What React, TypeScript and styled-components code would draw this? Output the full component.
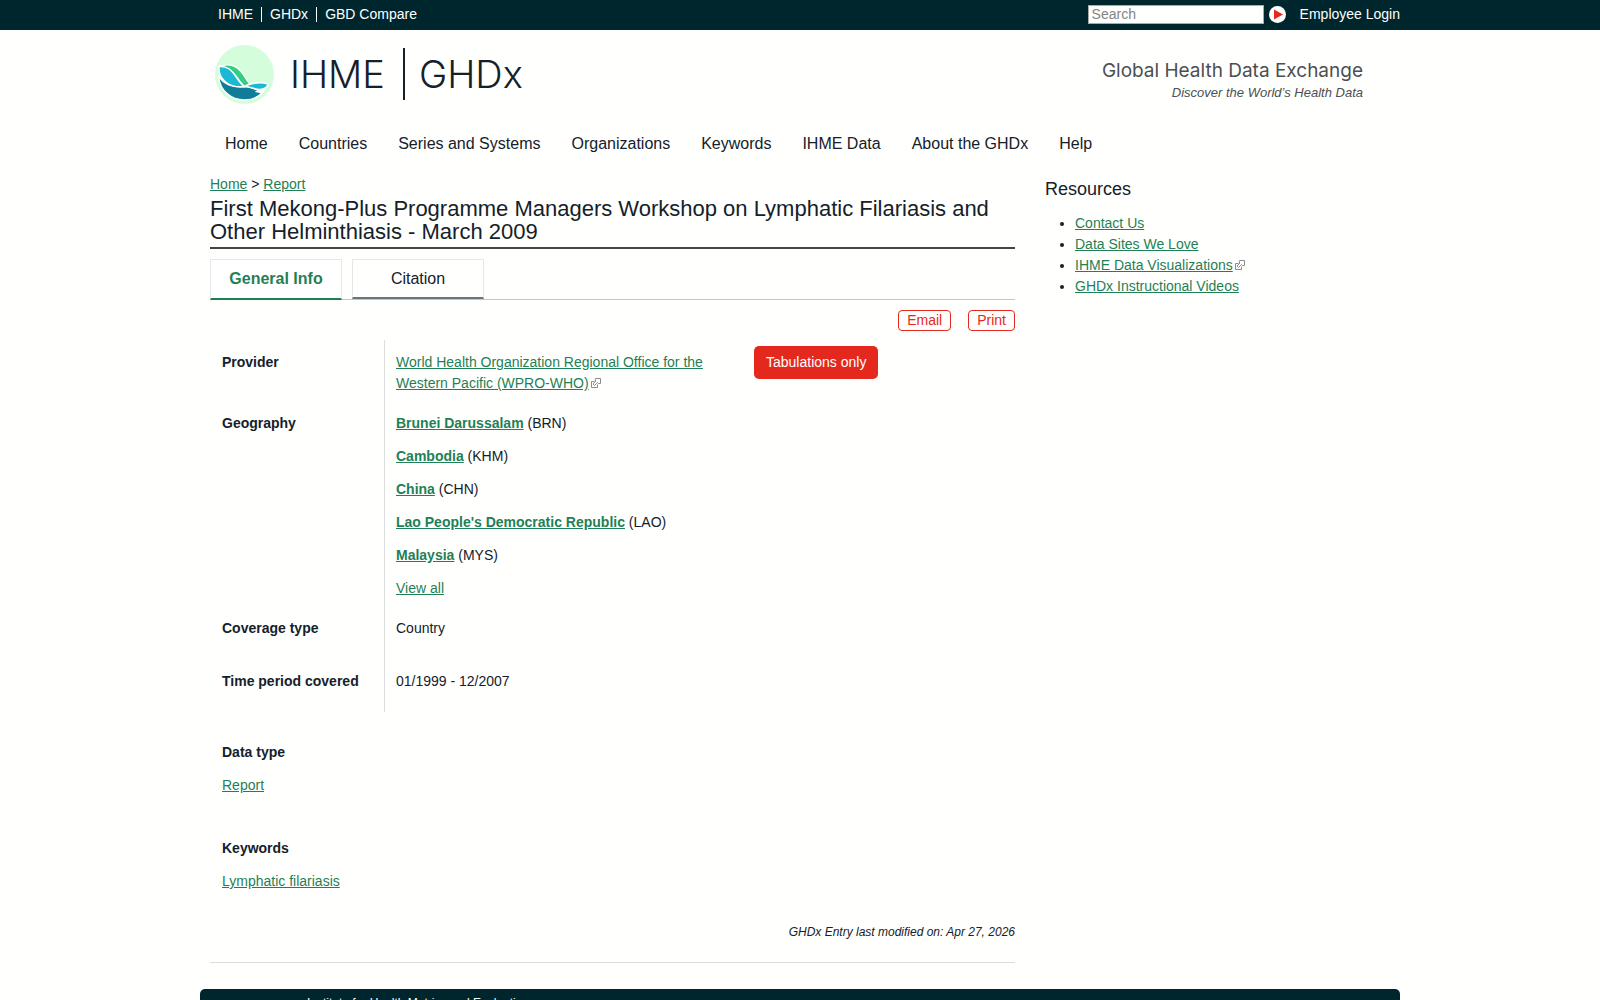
import React from "react";
import styled, { createGlobalStyle, css } from "styled-components";

const ink = "#14212b";
const green = "#1f7f56";
const red = "#e5281d";
const deep = "#00262d";

const GlobalStyle = createGlobalStyle`
  *, *::before, *::after { box-sizing: border-box; }
  body {
    margin: 0;
    background: #fffffd;
    color: ${ink};
    font: 14px/21px "Liberation Sans", Arial, sans-serif;
  }
  h1, h2, p, ul, dl, dd { margin: 0; padding: 0; }
`;

const Container = styled.div`
  max-width: 1200px;
  margin: 0 auto;
`;

const TopBar = styled.div`
  background: ${deep};
  color: #fff;
`;

const TopInner = styled(Container)`
  display: flex;
  align-items: center;
  height: 30px;
  padding: 0 0 2px 10px;
`;

const TopLink = styled.a<{ $divided?: boolean }>`
  color: #fff;
  text-decoration: none;
  line-height: 15px;
  padding: 0 8px;
  ${(p) => p.$divided && css`border-left: 1px solid #fff;`}
`;

const SearchForm = styled.form`
  display: flex;
  align-items: center;
  gap: 5px;
  margin-left: auto;
  margin-right: 14px;
`;

const SearchInput = styled.input`
  width: 176px;
  height: 19px;
  padding: 0 3px;
  border: 1px solid #aaa;
  background: #fffffd;
  font: inherit;
  &::placeholder { color: #858585; opacity: 1; }
`;

const GoButton = styled.button`
  display: flex;
  padding: 0;
  border: 0;
  background: none;
`;

const LoginLink = styled.a`
  color: #fff;
  text-decoration: none;
`;

const Header = styled.header`
  display: flex;
  justify-content: space-between;
  height: 92px;
  padding: 15px 37px 0 15px;
`;

const LogoLink = styled.a`
  display: flex;
  align-items: flex-start;
  color: ${ink};
  text-decoration: none;
`;

const Wordmark = styled.span`
  display: flex;
  align-items: center;
  height: 58px;
  font: 300 38px/58px Inter, "Liberation Sans", sans-serif;
`;

const WordPart = styled.span<{ $divided?: boolean }>`
  line-height: 52px;
  padding-left: ${(p) => (p.$divided ? 14 : 16)}px;
  margin-left: ${(p) => (p.$divided ? 18 : 0)}px;
  ${(p) => p.$divided && css`border-left: 2px solid ${ink};`}
`;

const Tagline = styled.div`
  padding-top: 14px;
  text-align: right;
  color: #4b4f54;
`;

const TagTitle = styled.p`
  font: 400 19px/24px Inter, "Liberation Sans", sans-serif;
`;

const TagSub = styled.p`
  font: italic 13px/20px "Liberation Sans", Arial, sans-serif;
`;

const Nav = styled.nav`
  display: flex;
  flex-wrap: wrap;
  gap: 31px;
  padding: 11px 25px 20px;
`;

const NavLink = styled.a`
  color: ${ink};
  font-size: 16px;
  line-height: 21px;
  text-decoration: none;
`;

const Columns = styled.div`
  display: grid;
  grid-template-columns: minmax(0, 805fr) minmax(0, 345fr);
  gap: 30px;
  padding: 0 10px;
`;

const Link = styled.a<{ $bold?: boolean }>`
  color: ${green};
  font-weight: ${(p) => (p.$bold ? 700 : 400)};
  text-decoration: underline;
  text-underline-offset: 1px;
`;

const Title = styled.h1`
  padding: 2px 0 4px;
  border-bottom: 2px solid #444;
  font-size: 22px;
  line-height: 23px;
  font-weight: 400;
`;

const Tabs = styled.div`
  display: flex;
  align-items: flex-start;
  gap: 10px;
  height: 41px;
  margin-top: 10px;
  border-bottom: 1px solid #c4c7c8;
`;

const Tab = styled.button<{ $active?: boolean }>`
  width: 132px;
  height: ${(p) => (p.$active ? 41 : 40)}px;
  padding: 0 0 ${(p) => (p.$active ? 1 : 0)}px;
  border: 1px solid #e6e8e8;
  border-bottom: 2px solid ${(p) => (p.$active ? green : "#68757a")};
  background: ${(p) => (p.$active ? "#fff" : "transparent")};
  color: ${(p) => (p.$active ? green : ink)};
  font: ${(p) => (p.$active ? 700 : 400)} 16px/21px "Liberation Sans", Arial, sans-serif;
`;

const Actions = styled.div`
  display: flex;
  justify-content: flex-end;
  gap: 17px;
  padding: 10px 0 9px;
`;

const ActionButton = styled.button`
  height: 21px;
  padding: 0 8px;
  border: 1px solid ${red};
  border-radius: 4px;
  background: transparent;
  color: ${red};
  font: inherit;
  line-height: 19px;
`;

const Record = styled.div`
  display: grid;
  grid-template-columns: 526px minmax(0, 1fr);
  gap: 18px;
  align-items: start;
`;

const Row = styled.div`
  display: grid;
  grid-template-columns: 174px minmax(0, 1fr);
`;

const Term = styled.dt`
  padding: 12px 12px 7px;
  font-weight: 700;
`;

const Value = styled.dd<{ $spaced?: boolean }>`
  padding: 12px 11px ${(p) => (p.$spaced ? 20 : 7)}px;
  border-left: 1px solid #dcdedf;
`;

const Places = styled.ul`
  display: grid;
  gap: 12px;
  list-style: none;
`;

const Badge = styled.span`
  justify-self: start;
  margin-top: 6px;
  padding: 6px 12px;
  border-radius: 5px;
  background: ${red};
  color: #fff;
`;

const Section = styled.section`
  display: grid;
  gap: 12px;
  padding: 30px 12px 12px;
`;

const SectionTitle = styled.h2`
  font-size: 14px;
  line-height: 21px;
`;

const Modified = styled.p`
  margin-top: 18px;
  padding-bottom: 19px;
  border-bottom: 1px solid #dcdedf;
  text-align: right;
  font-size: 12px;
  font-style: italic;
`;

const SideTitle = styled.h2`
  padding: 4px 0 13px;
  font-size: 18px;
  line-height: 22px;
  font-weight: 400;
`;

const SideList = styled.ul`
  && { padding-left: 30px; }
`;

const Footer = styled(Container)`
  margin-top: 26px;
  padding: 4px 107px 24px;
  border-radius: 5px;
  background: ${deep};
  color: #fff;
  font-size: 12px;
`;

const ExternalIcon = () => (
  <svg width="12" height="10" viewBox="0 0 12 10" fill="none" stroke="#8c8c8c" aria-hidden="true">
    <path d="M5.500 3.500h-3v6h6v-3" />
    <path d="M6.500.5h5v5h-2l-1-1-3 3-1.500-1.500 3-3-1-1z" fill="#fff" />
  </svg>
);

const Globe = () => (
  <svg width="59" height="59" viewBox="0 0 59 59" aria-hidden="true">
    <circle cx="29.500" cy="29.500" r="29.500" fill="#d4fedb" />
    <g stroke="#fff" strokeWidth="1.400" strokeLinejoin="round">
      <path d="M3.500 31C5 46 16 55 29.500 55c7.500 0 14-2.500 18.500-8.500-6-.500-11-5-18-5C18 43 8 39 3.500 31z" fill="#107c98" />
      <path d="M4 21.500C12 18.500 20 20 25.500 26c4 4 6 10 9.500 13l-5.500 2.500C22 35 19 22 4 21.500z" fill="#33cd83" />
      <path d="M4 21.500c9-.500 12.500 4 16.500 9.500 3.500 5 5.500 8.500 9 10.500C14 43.500 3 34 4 21.500z" fill="#1ab8d2" />
      <path d="M29.500 41.500c6-3.500 17-5 23-2.500 1 2.500-3 5.500-8 5.500C39 44.500 35 41 29.500 41.500z" fill="#1ab8d2" />
      <path d="M41 46.500c3-.500 5-1 8-1.500l-2 2.500z" fill="#33cd83" />
    </g>
  </svg>
);

const PlayIcon = () => (
  <svg width="17" height="17" viewBox="0 0 17 17" aria-hidden="true">
    <circle cx="8.500" cy="8.500" r="8.500" fill="#fff" />
    <path d="M5 3.500v10l9-5z" fill={red} />
  </svg>
);

const navItems = ["Home", "Countries", "Series and Systems", "Organizations", "Keywords", "IHME Data", "About the GHDx", "Help"];

const places = [
  ["Brunei Darussalam", "BRN"],
  ["Cambodia", "KHM"],
  ["China", "CHN"],
  ["Lao People's Democratic Republic", "LAO"],
  ["Malaysia", "MYS"],
];

const resources = [
  { label: "Contact Us" },
  { label: "Data Sites We Love" },
  { label: "IHME Data Visualizations", external: true },
  { label: "GHDx Instructional Videos" },
];

export default function App() {
  return (
    <>
      <GlobalStyle />
      <TopBar>
        <TopInner>
          <TopLink href="#">IHME</TopLink>
          <TopLink href="#" $divided>GHDx</TopLink>
          <TopLink href="#" $divided>GBD Compare</TopLink>
          <SearchForm>
            <SearchInput type="text" placeholder="Search" aria-label="Search" />
            <GoButton type="button" aria-label="Submit search"><PlayIcon /></GoButton>
          </SearchForm>
          <LoginLink href="#">Employee Login</LoginLink>
        </TopInner>
      </TopBar>

      <Container>
        <Header>
          <LogoLink href="#">
            <Globe />
            <Wordmark>
              <WordPart>IHME</WordPart>
              <WordPart $divided>GHDx</WordPart>
            </Wordmark>
          </LogoLink>
          <Tagline>
            <TagTitle>Global Health Data Exchange</TagTitle>
            <TagSub>Discover the World’s Health Data</TagSub>
          </Tagline>
        </Header>
        <Nav>
          {navItems.map((item) => (
            <NavLink href="#" key={item}>{item}</NavLink>
          ))}
        </Nav>

        <Columns>
          <main>
            <p>
              <Link href="#">Home</Link> &gt; <Link href="#">Report</Link>
            </p>
            <Title>
              First Mekong-Plus Programme Managers Workshop on Lymphatic Filariasis and Other
              Helminthiasis - March 2009
            </Title>
            <Tabs role="tablist">
              <Tab type="button" role="tab" aria-selected="true" $active>General Info</Tab>
              <Tab type="button" role="tab" aria-selected="false">Citation</Tab>
            </Tabs>
            <Actions>
              <ActionButton type="button">Email</ActionButton>
              <ActionButton type="button">Print</ActionButton>
            </Actions>

            <Record>
              <dl>
                <Row>
                  <Term>Provider</Term>
                  <Value>
                    <Link href="#">
                      World Health Organization Regional Office for the Western Pacific (WPRO-WHO)
                    </Link>
                    <ExternalIcon />
                  </Value>
                </Row>
                <Row>
                  <Term>Geography</Term>
                  <Value>
                    <Places>
                      {places.map(([name, code]) => (
                        <li key={code}>
                          <Link href="#" $bold>{name}</Link> ({code})
                        </li>
                      ))}
                      <li><Link href="#">View all</Link></li>
                    </Places>
                  </Value>
                </Row>
                <Row>
                  <Term>Coverage type</Term>
                  <Value $spaced>Country</Value>
                </Row>
                <Row>
                  <Term>Time period covered</Term>
                  <Value $spaced>01/1999 - 12/2007</Value>
                </Row>
              </dl>
              <Badge>Tabulations only</Badge>
            </Record>

            <Section>
              <SectionTitle>Data type</SectionTitle>
              <p><Link href="#">Report</Link></p>
            </Section>
            <Section>
              <SectionTitle>Keywords</SectionTitle>
              <p><Link href="#">Lymphatic filariasis</Link></p>
            </Section>
            <Modified>GHDx Entry last modified on: Apr 27, 2026</Modified>
          </main>

          <aside>
            <SideTitle>Resources</SideTitle>
            <SideList>
              {resources.map(({ label, external }) => (
                <li key={label}>
                  <Link href="#">{label}</Link>
                  {external && <ExternalIcon />}
                </li>
              ))}
            </SideList>
          </aside>
        </Columns>
      </Container>
      <Footer as="footer">Institute for Health Metrics and Evaluation</Footer>
    </>
  );
}
